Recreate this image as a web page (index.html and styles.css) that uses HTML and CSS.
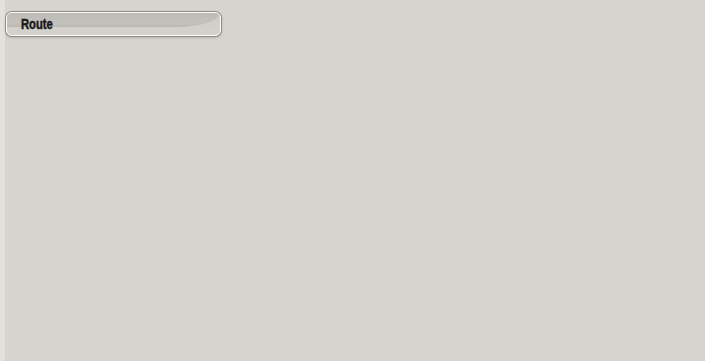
FILE: index.html
```html
<!DOCTYPE html>
<html>
<head>
<meta charset="utf-8">
<link rel="stylesheet" href="styles.css">
</head>
<body>
<div class="page">
  <div class="strip"></div>
  <div class="main">
    <div class="route-btn">
      <span class="gloss"></span>
      <span class="label">Route</span>
    </div>
  </div>
</div>
</body>
</html>
```

FILE: styles.css
```css
html, body {
  margin: 0;
  padding: 0;
  width: 705px;
  height: 361px;
  overflow: hidden;
  font-family: "Liberation Sans", Arial, sans-serif;
}
.page {
  display: flex;
  width: 705px;
  height: 361px;
  background: #d7d4cf;
}
.strip {
  width: 5px;
  background: #e4e1dd;
}
.main {
  flex: 1;
  padding-top: 12px;
}
.route-btn {
  position: relative;
  width: 213px;
  height: 22px;
  margin-left: 1px;
  border: 1.5px solid #fbfbfa;
  border-radius: 6px;
  box-shadow: 0 0 0 1px #8e8c88, 0 1px 3px rgba(0,0,0,0.35);
  background: linear-gradient(to bottom, #cfcdc8 0%, #d4d2ce 100%);
  overflow: hidden;
}
.gloss {
  position: absolute;
  left: 0;
  top: 0;
  width: 100%;
  height: 14px;
  border-bottom-right-radius: 45px 14px;
  background: linear-gradient(to bottom, #bdbbb6 0%, #c3c1bc 60%, #c1bfba 85%, #b7b5b0 100%);
}
.label {
  position: absolute;
  left: 14px;
  top: 3px;
  font-size: 14px;
  line-height: 16px;
  font-weight: bold;
  color: #1a1918;
  -webkit-text-stroke: 0.45px #1a1918;
  transform: scaleX(0.8);
  transform-origin: left center;
}
```
